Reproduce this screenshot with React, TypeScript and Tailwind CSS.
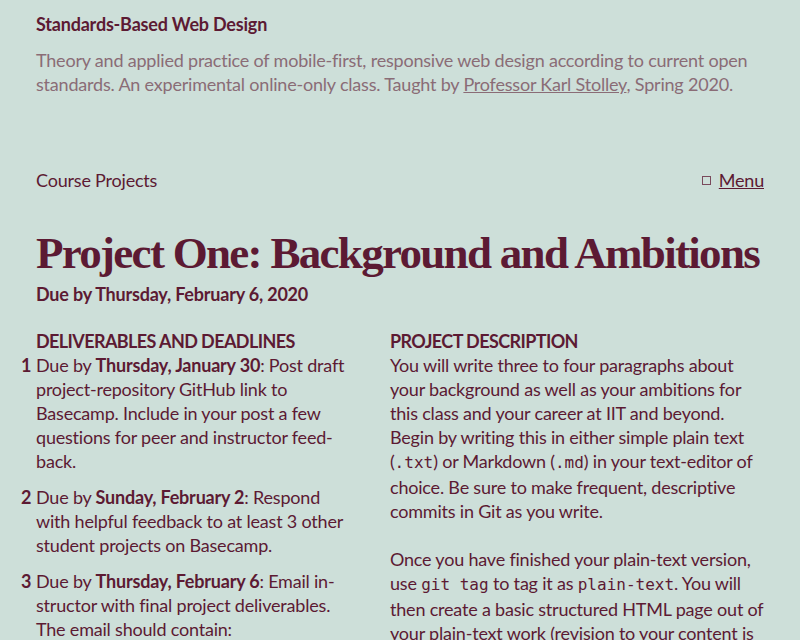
export default function App() {
  const sans = { fontFamily: "Lato, 'Noto Sans', sans-serif" };
  const mono = { fontFamily: "'DejaVu Sans Mono', monospace" };
  return (
    <div className="min-h-screen bg-[#cddfd9] text-[#5c1a33] px-9 pt-3 tracking-[-0.2px]" style={sans}>
      <header>
        <h1 className="text-[18px] font-bold leading-6">Standards-Based Web Design</h1>
        <p className="mt-3 text-[18px] leading-6 text-[#8a6c76]">
          Theory and applied practice of mobile-first, responsive web design according to current open
          standards. An experimental online-only class. Taught by{" "}
          <a href="#" className="underline">Professor Karl Stolley</a>, Spring 2020.
        </p>
      </header>

      <nav className="mt-[72px] flex justify-between items-center text-[18px] leading-6">
        <span>Course Projects</span>
        <span className="flex items-center gap-2">
          <span className="inline-block w-[9px] h-[9px] border border-[#7a4a5c]"></span>
          <a href="#" className="underline">Menu</a>
        </span>
      </nav>

      <main>
        <h2
          className="mt-[32px] text-[45px] leading-[58px] font-bold tracking-[-1.7px] whitespace-nowrap"
          style={{ fontFamily: "'Liberation Serif', serif" }}
        >
          Project One: Background and Ambitions
        </h2>
        <p className="text-[18px] leading-6 font-bold">Due by Thursday, February 6, 2020</p>

        <div className="mt-[23px] grid grid-cols-[316px_1fr] gap-x-[38px] text-[18px] leading-6">
          <section>
            <h3 className="font-bold uppercase tracking-[-0.6px]">Deliverables and Deadlines</h3>
            <ol className="flex flex-col gap-3">
              <li className="flex">
                <span className="w-0 -ml-[15px] mr-[15px] font-bold">1</span>
                <span>
                  Due by <strong>Thursday, January 30</strong>: Post draft project-repository GitHub link to
                  Basecamp. Include in your post a few questions for peer and instructor feed{"\u00AD"}back.
                </span>
              </li>
              <li className="flex">
                <span className="w-0 -ml-[15px] mr-[15px] font-bold">2</span>
                <span>
                  Due by <strong>Sunday, February 2</strong>: Respond with helpful feedback to at least 3 other
                  student projects on Basecamp.
                </span>
              </li>
              <li className="flex">
                <span className="w-0 -ml-[15px] mr-[15px] font-bold">3</span>
                <span>
                  Due by <strong>Thursday, February 6</strong>: Email in{"\u00AD"}structor with final project
                  deliverables. The email should contain:
                </span>
              </li>
            </ol>
          </section>
          <section>
            <h3 className="font-bold uppercase tracking-[-0.6px]">Project Description</h3>
            <p>
              You will write three to four paragraphs about your background as well as your ambitions for this
              class and your career at IIT and beyond. Begin by writing this in either simple plain text (
              <code style={mono} className="text-[16px] tracking-normal">.txt</code>) or Markdown (
              <code style={mono} className="text-[16px] tracking-normal">.md</code>) in your text-editor of choice.
              Be sure to make frequent, descriptive commits in Git as you write.
            </p>
            <p className="mt-6">
              Once you have finished your plain-text version, use{" "}
              <code style={mono} className="text-[16px] tracking-normal">git tag</code> to tag it as{" "}
              <code style={mono} className="text-[16px] tracking-normal">plain-text</code>. You will then create a
              basic structured HTML page out of your plain-text work (revision to your content is encouraged).
            </p>
          </section>
        </div>
      </main>
    </div>
  );
}
